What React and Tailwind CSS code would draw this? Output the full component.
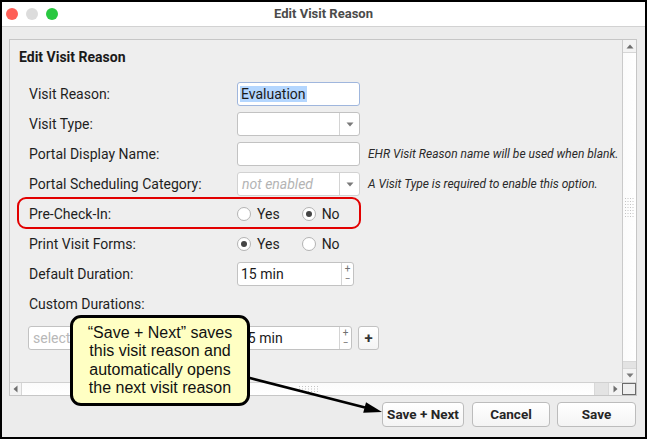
import React from "react";

const UI = { fontFamily: 'Roboto, "Liberation Sans", sans-serif' };

function Label({ children }) {
  return <div className="w-[208px] shrink-0 text-[14px] text-[#1e1e1e] leading-[18px]">{children}</div>;
}

function Row({ children, className = "" }) {
  return <div className={"flex items-center h-[30px] pl-[19px] " + className}>{children}</div>;
}

function DownTri() {
  return (
    <svg width="8" height="5" viewBox="0 0 8 5">
      <polygon points="0.5,0.5 7.5,0.5 4,4.5" fill="#7a7a7a" />
    </svg>
  );
}

function Select({ placeholder, disabled, w = "w-[123px]" }) {
  return (
    <div className={`${w} h-[24px] flex bg-white border ${disabled ? "border-[#d2d2d2]" : "border-[#c2c2c2]"} rounded-[3px] shrink-0`}>
      <div className={`flex-1 flex items-center pl-[4px] text-[14px] ${disabled ? "italic text-[#b4b4b4]" : "text-[#b8b8b8]"}`}>
        {placeholder}
      </div>
      <div className="w-[20px] border-l border-[#d4d4d4] flex items-center justify-center">
        <DownTri />
      </div>
    </div>
  );
}

function Spinner({ value, w = "w-[117px]" }) {
  return (
    <div className={`${w} h-[24px] flex bg-white border border-[#c2c2c2] rounded-[3px] shrink-0`}>
      <div className="flex-1 flex items-center pl-[3px] text-[14px] text-[#1a1a1a]">{value}</div>
      <div className="w-[12px] border-l border-[#d4d4d4] flex flex-col items-center justify-center text-[10px] leading-[10px] text-[#707070]">
        <span>+</span>
        <span>−</span>
      </div>
    </div>
  );
}

function Radio({ checked, label }) {
  return (
    <div className="flex items-center">
      <div className="w-[14px] h-[14px] rounded-full border border-[#b3b3b3] bg-white flex items-center justify-center shrink-0">
        {checked && <div className="w-[6px] h-[6px] rounded-full bg-[#454545]" />}
      </div>
      <span className="ml-[6px] text-[14px] text-[#1e1e1e] leading-[18px]">{label}</span>
    </div>
  );
}

function Hint({ children }) {
  return <div className="ml-[8px] italic text-[12px] text-[#2a2a2a] whitespace-nowrap">{children}</div>;
}

function GripV() {
  const dots = [];
  for (let r = 0; r < 7; r++) for (let c = 0; c < 4; c++) dots.push(<rect key={r + "-" + c} x={1 + c * 2.5} y={1 + r * 3} width="1" height="1" fill="#c4c4c4" />);
  return <svg width="11" height="21" viewBox="0 0 11 21">{dots}</svg>;
}

function GripH() {
  const dots = [];
  for (let r = 0; r < 3; r++) for (let c = 0; c < 7; c++) dots.push(<rect key={r + "-" + c} x={1 + c * 3} y={1 + r * 2.5} width="1" height="1" fill="#c4c4c4" />);
  return <svg width="21" height="8" viewBox="0 0 21 8">{dots}</svg>;
}

function Button({ children, w }) {
  return (
    <div className={`${w} h-[25px] flex items-center justify-center rounded-[4px] border border-[#bcbcbc] bg-gradient-to-b from-white to-[#f4f4f4] text-[13.5px] font-bold text-[#262626]`}>
      {children}
    </div>
  );
}

export default function App() {
  return (
    <div style={UI} className="relative w-[647px] h-[439px] border-2 border-black bg-[#ececec] overflow-hidden flex flex-col">
      {/* Title bar */}
      <div className="h-[25px] shrink-0 bg-white border-b border-[#d2d2d2] relative flex items-center pl-[4px]">
        <div className="flex items-center gap-[8px]">
          <div className="w-[12px] h-[12px] rounded-full bg-[#fe5f57]" />
          <div className="w-[12px] h-[12px] rounded-full bg-[#dcdcdc]" />
          <div className="w-[12px] h-[12px] rounded-full bg-[#29c840]" />
        </div>
        <div className="absolute inset-0 flex items-center justify-center text-[13px] font-bold text-[#4b4b4b]">Edit Visit Reason</div>
      </div>

      {/* Body */}
      <div className="flex-1 flex flex-col pt-[12px] pl-[7px] pr-[8px] pb-[10px]">
        <div className="h-[357px] shrink-0 border border-[#c6c6c6] bg-[#eeeeee] flex flex-col">
          <div className="flex flex-1 min-h-0">
            <div className="flex-1 overflow-hidden">
              <div className="h-[39px] pt-[9px] pl-[9px] text-[14px] font-bold leading-[17px] text-[#1a1a1a]">Edit Visit Reason</div>

              <Row>
                <Label>Visit Reason:</Label>
                <div className="w-[123px] h-[24px] bg-white border border-[#9fb6dd] rounded-[3px] flex items-center pl-[2px] shrink-0">
                  <span className="bg-[#b4d6fe] px-[1px] text-[14px] leading-[16px] text-[#1a1a1a]">Evaluation</span>
                </div>
              </Row>

              <Row>
                <Label>Visit Type:</Label>
                <Select placeholder="" />
              </Row>

              <Row>
                <Label>Portal Display Name:</Label>
                <div className="w-[123px] h-[24px] bg-white border border-[#c2c2c2] rounded-[3px] shrink-0" />
                <Hint>EHR Visit Reason name will be used when blank.</Hint>
              </Row>

              <Row>
                <Label>Portal Scheduling Category:</Label>
                <Select placeholder="not enabled" disabled />
                <Hint>A Visit Type is required to enable this option.</Hint>
              </Row>

              <Row>
                <Label>Pre-Check-In:</Label>
                <div className="flex items-center gap-[22px]">
                  <Radio label="Yes" />
                  <Radio label="No" checked />
                </div>
              </Row>

              <Row>
                <Label>Print Visit Forms:</Label>
                <div className="flex items-center gap-[22px]">
                  <Radio label="Yes" checked />
                  <Radio label="No" />
                </div>
              </Row>

              <Row>
                <Label>Default Duration:</Label>
                <Spinner value="15 min" />
              </Row>

              <Row>
                <Label>Custom Durations:</Label>
              </Row>

              <div className="flex items-center h-[24px] mt-[7px] pl-[18px]">
                <Select placeholder="select..." w="w-[200px]" />
                <div className="ml-[8px]">
                  <Spinner value="15 min" w="w-[116px]" />
                </div>
                <div className="ml-[6px] w-[21px] h-[24px] rounded-[3px] border border-[#c2c2c2] bg-gradient-to-b from-white to-[#f4f4f4] flex items-center justify-center text-[15px] font-bold text-[#333] leading-none">
                  +
                </div>
              </div>
            </div>

            {/* Vertical scrollbar */}
            <div className="w-[14px] shrink-0 border-l border-[#cacaca] flex flex-col bg-[#f3f3f3]">
              <div className="h-[13px] border-b border-[#d6d6d6] flex items-center justify-center">
                <svg width="8" height="5" viewBox="0 0 8 5">
                  <polygon points="0.5,4.5 7.5,4.5 4,0.5" fill="#6e6e6e" />
                </svg>
              </div>
              <div className="flex-1 bg-gradient-to-r from-[#fbfbfb] to-white flex items-center justify-center">
                <GripV />
              </div>
              <div className="h-[8px] bg-[#e3e3e3] border-y border-[#d8d8d8]" />
              <div className="h-[13px] flex items-center justify-center">
                <DownTri />
              </div>
            </div>
          </div>

          {/* Horizontal scrollbar */}
          <div className="h-[13px] shrink-0 flex border-t border-[#d0d0d0]">
            <div className="flex-1 flex bg-[#f3f3f3]">
              <div className="w-[12px] border-r border-[#d6d6d6] flex items-center justify-center">
                <svg width="5" height="8" viewBox="0 0 5 8">
                  <polygon points="4.5,0.5 4.5,7.5 0.5,4" fill="#6e6e6e" />
                </svg>
              </div>
              <div className="flex-1 bg-gradient-to-b from-[#fbfbfb] to-white flex items-center justify-center">
                <GripH />
              </div>
              <div className="w-[15px] bg-[#e3e3e3] border-x border-[#d8d8d8]" />
              <div className="w-[13px] flex items-center justify-center">
                <svg width="5" height="8" viewBox="0 0 5 8">
                  <polygon points="0.5,0.5 0.5,7.5 4.5,4" fill="#6e6e6e" />
                </svg>
              </div>
            </div>
            <div className="w-[14px] shrink-0 border border-[#6a6a6a] bg-[#efefef]" />
          </div>
        </div>

        {/* Buttons */}
        <div className="flex justify-end mt-[6px] pr-[1px]">
          <Button w="w-[82px]">Save + Next</Button>
          <div className="w-[8px]" />
          <Button w="w-[78px]">Cancel</Button>
          <div className="w-[7px]" />
          <Button w="w-[79px]">Save</Button>
        </div>
      </div>

      {/* Red highlight around Pre-Check-In */}
      <div className="absolute left-[15px] top-[195px] w-[344px] h-[32px] border-[2.5px] border-[#e20000] rounded-[9px] pointer-events-none" />

      {/* Arrow */}
      <svg className="absolute left-[-2px] top-[-2px] pointer-events-none" width="647" height="439" viewBox="0 0 647 439">
        <line x1="248" y1="377.5" x2="365" y2="407.5" stroke="#000" strokeWidth="2.6" />
        <polygon points="382,412 363.2,412.8 366,402.2" fill="#000" />
      </svg>

      {/* Callout */}
      <div
        style={{ fontFamily: '"Liberation Sans", Arial, sans-serif' }}
        className="absolute left-[68px] top-[313px] w-[180px] h-[91px] border-[3px] border-black rounded-[11px] bg-[#ffffc3] flex flex-col items-center justify-center text-[16px] leading-[18.5px] text-[#111] text-center"
      >
        <div>“Save + Next” saves</div>
        <div>this visit reason and</div>
        <div>automatically opens</div>
        <div>the next visit reason</div>
      </div>
    </div>
  );
}
